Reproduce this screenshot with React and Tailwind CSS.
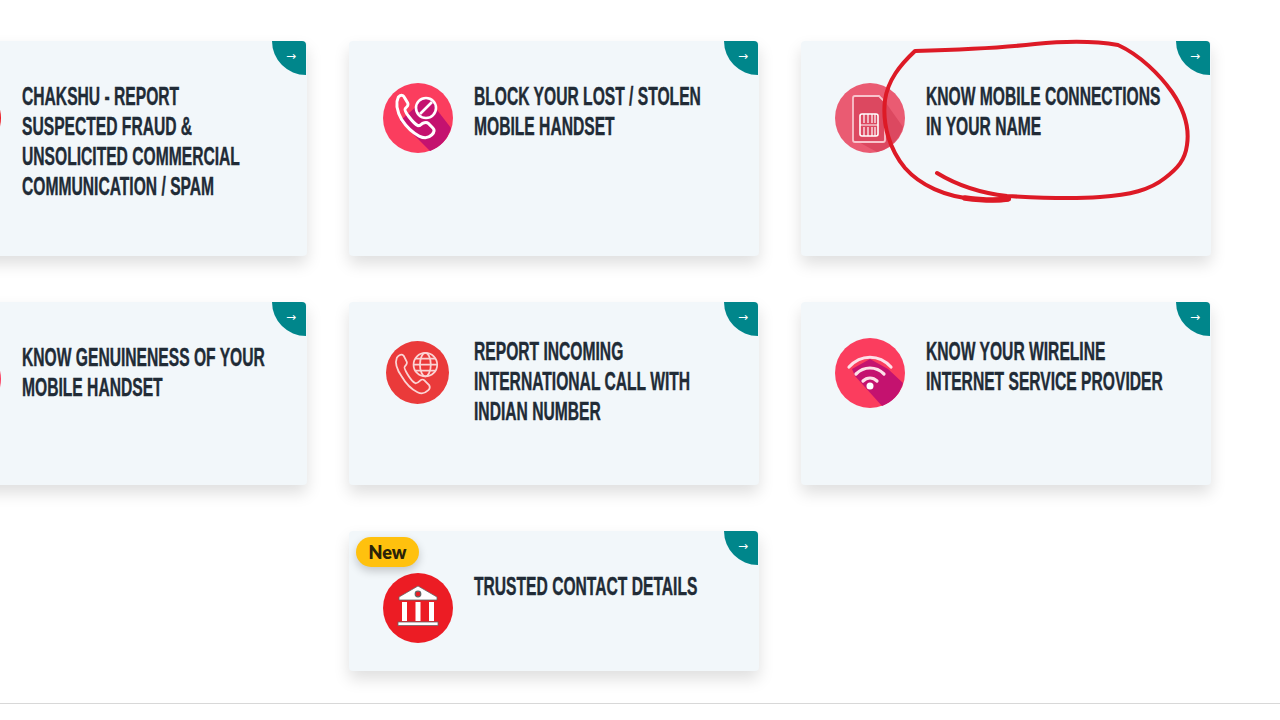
const cardFont = { fontFamily: '"Liberation Sans", sans-serif' }

function PhoneStroke({ transform }) {
  return (
    <path
      transform={transform}
      d="M16 13c2-2 4-2 5 0l3 5c1 2 0 3-2 5-1 1 0 3 3 7s6 7 8 8c1 0 3-1 4-2 2-1 4-1 5 0l4 4c2 2 1 4-1 6-3 3-7 3-11 1-6-3-11-8-15-14-4-7-6-14-3-20z"
      fill="none"
      stroke="#fff"
      strokeWidth="2.6"
      strokeLinejoin="round"
    />
  )
}

function BlockIcon() {
  return (
    <svg viewBox="0 0 70 70" className="w-[70px] h-[70px]">
      <circle cx="35" cy="35" r="35" fill="#fb3d5e" />
      <path d="M44 14 L68 45 A35 35 0 0 1 47 68 L17 38 Z" fill="#c4126f" />
      <PhoneStroke transform="translate(-3 -1) scale(1.15)" />
      <circle cx="43" cy="25" r="10" fill="#c4126f" stroke="#fff" strokeWidth="2.6" />
      <path d="M37 31 L49 19" stroke="#fff" strokeWidth="2.6" />
    </svg>
  )
}

function SimIcon() {
  return (
    <svg viewBox="0 0 70 70" className="w-[70px] h-[70px]">
      <circle cx="35" cy="35" r="35" fill="#ea5b72" />
      <path d="M20 13 L46 13 L68 44 A35 35 0 0 1 42 69 L18 56 Z" fill="#dc4860" />
      <path d="M20 13h24l6 6v38a2 2 0 0 1-2 2H20a2 2 0 0 1-2-2V15a2 2 0 0 1 2-2z" fill="#dc4860" stroke="#f8c4cc" strokeWidth="1.8" />
      <rect x="25" y="31" width="18" height="22" rx="2" fill="none" stroke="#fff" strokeWidth="1.6" />
      <path d="M29 31v9M33 31v9M37 31v9M40 31v9M29 53v-9M33 53v-9M37 53v-9M40 53v-9M25 42h18" stroke="#fff" strokeWidth="1.2" fill="none" />
    </svg>
  )
}

function GlobeIcon() {
  return (
    <svg viewBox="0 0 64 64" className="w-[63px] h-[63px]">
      <circle cx="32" cy="32" r="32" fill="#ea3a3a" />
      <g fill="none" stroke="#fbd4d4" strokeWidth="1.800">
        <path d="M11 17c2-3 5-4 7-2l3 6c1 2 0 3-2 5-1 1 0 3 3 8s6 8 8 9c2 0 3-1 5-3 1-1 3-1 4 0l5 5c1 2 1 3-1 5-3 3-7 4-11 2-6-3-12-9-16-16-5-7-7-14-5-19z" />
        <circle cx="40" cy="24" r="12" />
        <ellipse cx="40" cy="24" rx="5.500" ry="12" />
        <path d="M28 24h24M30 18h20M30 30h20" />
      </g>
    </svg>
  )
}

function WifiIcon() {
  return (
    <svg viewBox="0 0 70 70" className="w-[70px] h-[70px]">
      <circle cx="35" cy="35" r="35" fill="#fb3d5e" />
      <path d="M17 31 L35 21 L53 31 L68 45 A35 35 0 0 1 47 68 L20 38 Z" fill="#c4126f" />
      <g fill="none" stroke="#fde0e8" strokeWidth="3.200" strokeLinecap="round">
        <path d="M14 29C26 16 44 16 56 29" />
        <path d="M21 36C29 28 41 28 49 36" />
        <path d="M28 43C32 39 38 39 42 43" />
      </g>
      <circle cx="35" cy="48" r="3.500" fill="#fff" />
    </svg>
  )
}

function BankIcon() {
  return (
    <svg viewBox="0 0 70 70" className="w-[70px] h-[70px]">
      <circle cx="35" cy="35" r="35" fill="#ec1c24" />
      <path d="M35 13 L54 24 V27 H16 V24 Z" fill="#fff" stroke="#666" strokeWidth=".8" />
      <circle cx="35" cy="21" r="2.800" fill="#ec1c24" stroke="#666" strokeWidth="1.200" />
      <rect x="19" y="29" width="5" height="19" fill="#fff" />
      <rect x="32.500" y="29" width="5" height="19" fill="#fff" />
      <rect x="46" y="29" width="5" height="19" fill="#fff" />
      <rect x="15" y="49" width="40" height="3.500" fill="#fff" stroke="#666" strokeWidth=".8" />
    </svg>
  )
}

function Card({ title, icon, height, textTop, iconClass, isNew }) {
  return (
    <div className={`relative bg-[#f2f7fa] rounded shadow-[0_8px_16px_rgba(0,0,0,0.13)] flex ${height}`}>
      <div className="absolute top-0 right-px w-[34px] h-[34px] bg-[#00868b] rounded-bl-[34px] rounded-tr flex items-center justify-center text-white text-xs">
        <span className="-mt-1 ml-1" style={{ fontFamily: '"DejaVu Sans", sans-serif' }}>→</span>
      </div>
      {isNew && (
        <span className="absolute left-[7px] top-[6px] w-[63px] h-[30px] rounded-full bg-[#ffc10e] text-[#2a2208] text-lg font-extrabold flex items-center justify-center shadow-[0_4px_10px_rgba(0,0,0,0.2)] font-['Lato',sans-serif]">
          New
        </span>
      )}
      <div className={`shrink-0 ${iconClass}`}>{icon}</div>
      <div
        className={`absolute left-[125px] whitespace-nowrap origin-left scale-x-[0.625] text-[#212b36] text-[25px] leading-[30px] font-bold [-webkit-text-stroke:0.4px_#212b36] ${textTop}`}
        style={cardFont}
      >
        {title}
      </div>
    </div>
  )
}

export default function App() {
  return (
    <div className="relative w-[1280px] h-[720px] overflow-hidden bg-white pt-[41px]">
      <div className="grid grid-cols-[410px_410px_410px] gap-x-[42px] gap-y-[46px] -ml-[103px]">
        <Card
          title={<>CHAKSHU - REPORT<br />SUSPECTED FRAUD &amp;<br />UNSOLICITED COMMERCIAL<br />COMMUNICATION / SPAM</>}
          icon={<BankIcon />}
          height="h-[215px]"
          textTop="top-[40px]"
          iconClass="ml-[34px] mt-[42px]"
        />
        <Card
          title={<>BLOCK YOUR LOST / STOLEN<br />MOBILE HANDSET</>}
          icon={<BlockIcon />}
          height="h-[215px]"
          textTop="top-[40px]"
          iconClass="ml-[34px] mt-[42px]"
        />
        <Card
          title={<>KNOW MOBILE CONNECTIONS<br />IN YOUR NAME</>}
          icon={<SimIcon />}
          height="h-[215px]"
          textTop="top-[40px]"
          iconClass="ml-[34px] mt-[42px]"
        />
        <Card
          title={<>KNOW GENUINENESS OF YOUR<br />MOBILE HANDSET</>}
          icon={<BlockIcon />}
          height="h-[183px]"
          textTop="top-[40px]"
          iconClass="ml-[34px] mt-[42px]"
        />
        <Card
          title={<>REPORT INCOMING<br />INTERNATIONAL CALL WITH<br />INDIAN NUMBER</>}
          icon={<GlobeIcon />}
          height="h-[183px]"
          textTop="top-[34px]"
          iconClass="ml-[37px] mt-[39px]"
        />
        <Card
          title={<>KNOW YOUR WIRELINE<br />INTERNET SERVICE PROVIDER</>}
          icon={<WifiIcon />}
          height="h-[183px]"
          textTop="top-[34px]"
          iconClass="ml-[34px] mt-[36px]"
        />
        <div className="col-start-2">
          <Card
            title="TRUSTED CONTACT DETAILS"
            icon={<BankIcon />}
            height="h-[140px]"
            textTop="top-[40px]"
            iconClass="ml-[34px] mt-[42px]"
            isNew
          />
        </div>
      </div>
      <div className="mt-[32px] border-t border-[#d8d8d8]" />

      {/* hand drawn marker circle on top of the third card */}
      <svg className="absolute inset-0 w-[1280px] h-[720px] pointer-events-none" viewBox="0 0 1280 720">
        <g fill="none" stroke="#dd1a26" strokeLinecap="round" strokeLinejoin="round">
          <path
            d="M937 173C955 184 980 193 1007 196C1040 198 1075 199 1100 197C1130 195 1150 190 1165 178C1178 168 1185 160 1187 145C1190 125 1183 108 1172 92C1160 75 1140 55 1118 45C1095 41 1065 41 1035 44C1000 48 950 50 915 51C900 65 888 80 885 100C882 125 890 150 905 168C920 185 945 197 975 199C985 200 1000 201 1009 199"
            strokeWidth="4"
          />
          <path d="M965 198C980 200 995 201 1008 199" strokeWidth="5.500" />
        </g>
      </svg>
    </div>
  )
}
